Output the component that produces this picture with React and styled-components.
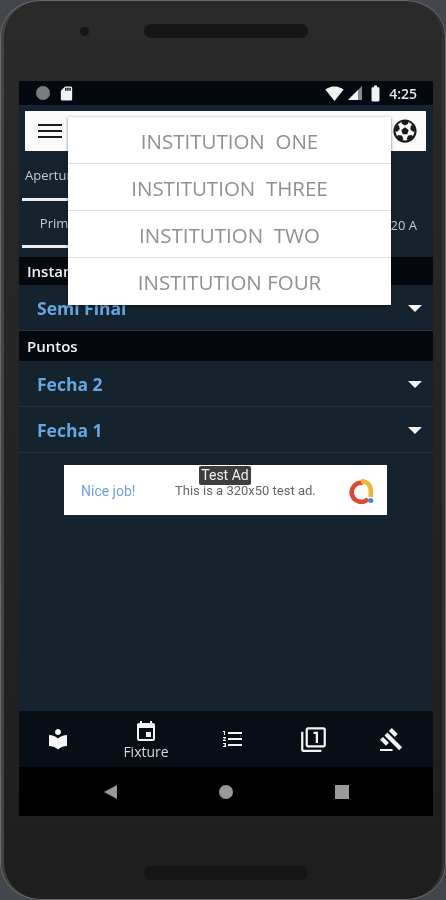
import React from "react";
import styled, { createGlobalStyle } from "styled-components";
import {
  MdLocalLibrary,
  MdEvent,
  MdFormatListNumbered,
  MdFilter1,
  MdGavel,
  MdSdCard,
  MdSignalWifi4Bar,
  MdBatteryStd,
} from "react-icons/md";
import { FaFutbol } from "react-icons/fa";

const institutions = ["INSTITUTION  ONE", "INSTITUTION  THREE", "INSTITUTION  TWO", "INSTITUTION FOUR"];

export default function App() {
  return (
    <>
      <GlobalStyle />
      <Phone>
        <TopBezel>
          <Camera />
          <Speaker />
        </TopBezel>
        <Screen>
          <StatusBar>
            <StatusGroup>
              <StatusDot />
              <MdSdCard size={17} color="#f2f2f2" />
            </StatusGroup>
            <StatusGroup>
              <MdSignalWifi4Bar size={19} color="#f2f2f2" />
              <SignalIcon viewBox="0 0 14 14">
                <path d="M14 0v14H0z" fill="#8b8b8b" />
                <path d="M10 4v10H0z" fill="#f2f2f2" />
              </SignalIcon>
              <MdBatteryStd size={19} color="#f2f2f2" />
              <Clock>4:25</Clock>
            </StatusGroup>
          </StatusBar>
          <Main>
            <TopSection>
              <AppBar>
                <MenuIcon>
                  <span />
                  <span />
                  <span />
                </MenuIcon>
                <FaFutbol size={24} color="#1a1a1a" />
              </AppBar>
              <Tabs $height={50}>
                <Tab $align="flex-start">Apertura</Tab>
              </Tabs>
              <Tabs $height={47}>
                <Tab $align="center">Primera</Tab>
                <TabEnd>Sub 20 A</TabEnd>
              </Tabs>
            </TopSection>
            <SectionTitle $height={28} $gap={9}>Instancia</SectionTitle>
            <Row>
              <RowTitle>Semi Final</RowTitle>
              <Caret />
            </Row>
            <SectionTitle $height={30}>Puntos</SectionTitle>
            <Row>
              <RowTitle>Fecha 2</RowTitle>
              <Caret />
            </Row>
            <Row>
              <RowTitle>Fecha 1</RowTitle>
              <Caret />
            </Row>
            <AdBanner>
              <AdBadge>Test Ad</AdBadge>
              <AdLead>Nice job!</AdLead>
              <AdText>This is a 320x50 test ad.</AdText>
              <AdLogo viewBox="0 0 26 26">
                <path d="M20 21a9.5 9.5 0 1 1-5-16" fill="none" stroke="#e0492f" strokeWidth="4.6" />
                <path d="M13 3.2c6 0 9.8 4 9.8 9.8V19" fill="none" stroke="#f4b52e" strokeWidth="4.6" />
                <circle cx="22.8" cy="22.4" r="2.5" fill="#3f84e5" />
              </AdLogo>
            </AdBanner>
            <Menu>
              {institutions.map((name) => (
                <MenuItem key={name}>{name}</MenuItem>
              ))}
            </Menu>
          </Main>
          <BottomNav>
            <NavItem>
              <MdLocalLibrary size={24} />
            </NavItem>
            <NavItem>
              <MdEvent size={24} />
              <NavLabel>Fixture</NavLabel>
            </NavItem>
            <NavItem>
              <MdFormatListNumbered size={24} />
            </NavItem>
            <NavItem>
              <MdFilter1 size={27} />
            </NavItem>
            <NavItem>
              <MdGavel size={25} />
            </NavItem>
          </BottomNav>
          <SystemNav>
            <BackKey />
            <HomeKey />
            <RecentKey />
          </SystemNav>
        </Screen>
        <BottomBezel>
          <Speaker />
        </BottomBezel>
      </Phone>
    </>
  );
}

const GlobalStyle = createGlobalStyle`
  html, body {
    margin: 0;
    padding: 0;
    background: #44464e;
  }
  body {
    font-family: "Open Sans", sans-serif;
  }
`;

const Phone = styled.div`
  width: 446px;
  height: 900px;
  box-sizing: border-box;
  padding: 0 13px 0 19px;
  border-radius: 40px / 36px;
  background: linear-gradient(#2a2a2a, #1e1e1e);
  box-shadow: inset 0 0 0 1px #6a6a6a, inset 4px 0 0 #444444, inset -4px 0 0 #333333;
  display: flex;
  flex-direction: column;
  overflow: hidden;
  filter: blur(0.4px);
`;

const TopBezel = styled.div`
  height: 81px;
  flex: none;
  position: relative;
  display: flex;
  justify-content: center;
  padding-top: 24px;
  box-sizing: border-box;
`;

const Camera = styled.div`
  position: absolute;
  left: 61px;
  top: 27px;
  width: 9px;
  height: 9px;
  border-radius: 50%;
  background: #161616;
`;

const Speaker = styled.div`
  width: 164px;
  height: 14px;
  border-radius: 7px;
  background: #151515;
`;

const Screen = styled.div`
  width: 414px;
  height: 735px;
  flex: none;
  display: flex;
  flex-direction: column;
  background: #15232f;
`;

const StatusBar = styled.div`
  height: 24px;
  flex: none;
  background: #05090f;
  display: flex;
  justify-content: space-between;
  align-items: center;
  padding: 0 16px 0 17px;
`;

const StatusGroup = styled.div`
  display: flex;
  align-items: center;
  gap: 4px;
`;

const StatusDot = styled.div`
  width: 14px;
  height: 14px;
  border-radius: 50%;
  background: #7b7b7b;
  margin-right: 4px;
`;

const SignalIcon = styled.svg`
  width: 14px;
  height: 14px;
`;

const Clock = styled.span`
  color: #e6e6e6;
  font-size: 14px;
  font-weight: 600;
`;

const Main = styled.div`
  flex: 1;
  position: relative;
  display: flex;
  flex-direction: column;
  box-shadow: inset 0 2px 0 #10283c;
`;

const TopSection = styled.div`
  padding-top: 6px;
`;

const AppBar = styled.div`
  height: 40px;
  margin: 0 7px 0 6px;
  background: #fbfbfb;
  display: flex;
  justify-content: space-between;
  align-items: center;
  padding: 0 9px 0 13px;
`;

const MenuIcon = styled.div`
  display: flex;
  flex-direction: column;
  gap: 4px;
  span {
    display: block;
    width: 24px;
    height: 2px;
    background: #1c1c1c;
  }
`;

const Tabs = styled.div`
  height: ${(p) => p.$height}px;
  display: flex;
  justify-content: space-between;
  align-items: center;
  padding: 0 3px;
`;

const Tab = styled.div`
  width: 90px;
  height: 100%;
  box-sizing: border-box;
  border-bottom: 3px solid #ededed;
  display: flex;
  align-items: center;
  justify-content: ${(p) => p.$align};
  padding: ${(p) => (p.$align === "center" ? "0 6px 0 0" : "0 0 0 3px")};
  color: #c4c8cc;
  font-size: 13px;
`;

const TabEnd = styled.div`
  color: #c4c8cc;
  font-size: 13px;
  padding-right: 13px;
`;

const SectionTitle = styled.div`
  height: ${(p) => p.$height}px;
  background: #05090f;
  color: #f2f2f2;
  font-size: 15px;
  font-weight: 600;
  display: flex;
  align-items: center;
  padding-left: 8px;
  margin-top: ${(p) => p.$gap || 0}px;
`;

const Row = styled.div`
  height: 46px;
  box-sizing: border-box;
  border-bottom: 1px solid #22313d;
  display: flex;
  justify-content: space-between;
  align-items: center;
  padding: 1px 11px 0 18px;
`;

const RowTitle = styled.span`
  color: #63a6e0;
  font-size: 17.5px;
  font-weight: 700;
`;

const Caret = styled.div`
  width: 0;
  height: 0;
  border-left: 7px solid transparent;
  border-right: 7px solid transparent;
  border-top: 7px solid #f5f5f5;
`;

const AdBanner = styled.div`
  width: 323px;
  height: 50px;
  margin: 12px 0 0 45px;
  background: #ffffff;
  position: relative;
  display: flex;
  align-items: center;
  padding-top: 1px;
  box-sizing: border-box;
  font-family: "Roboto", sans-serif;
  font-size: 13px;
`;

const AdBadge = styled.div`
  position: absolute;
  left: 135px;
  top: 1px;
  width: 52px;
  height: 19px;
  border-radius: 2px;
  background: #3e3e3e;
  color: #f0f0f0;
  font-size: 14px;
  text-align: center;
  line-height: 19px;
`;

const AdLead = styled.span`
  color: #6f9fe8;
  margin-left: 17px;
  width: 94px;
  font-size: 14px;
`;

const AdText = styled.span`
  color: #666;
  flex: 1;
`;

const AdLogo = styled.svg`
  width: 26px;
  height: 26px;
  margin-right: 13px;
`;

const Menu = styled.div`
  position: absolute;
  left: 49px;
  top: 12px;
  width: 323px;
  background: #ffffff;
  box-shadow: 0 1px 3px rgba(0, 0, 0, 0.5);
`;

const MenuItem = styled.div`
  height: 47px;
  box-sizing: border-box;
  border-bottom: 1px solid #dedede;
  padding-top: 1px;
  display: flex;
  justify-content: center;
  align-items: center;
  color: #909090;
  font-size: 20.5px;
  white-space: pre;
  &:last-child {
    border-bottom: 0;
  }
`;

const BottomNav = styled.div`
  height: 56px;
  flex: none;
  background: #080e15;
  display: grid;
  grid-template-columns: 78px 98px 76px 84px 72px;
`;

const NavItem = styled.div`
  color: #f4f4f4;
  display: flex;
  flex-direction: column;
  align-items: center;
  justify-content: center;
  svg {
    display: block;
  }
`;

const NavLabel = styled.span`
  color: #d8d8d8;
  font-size: 14px;
  line-height: 15px;
`;

const SystemNav = styled.div`
  height: 49px;
  flex: none;
  background: #000;
  display: flex;
  justify-content: center;
  align-items: center;
  gap: 102px;
`;

const BackKey = styled.div`
  width: 0;
  height: 0;
  border-top: 7px solid transparent;
  border-bottom: 7px solid transparent;
  border-right: 13px solid #9a9a9a;
`;

const HomeKey = styled.div`
  width: 14px;
  height: 14px;
  border-radius: 50%;
  background: #9a9a9a;
`;

const RecentKey = styled.div`
  width: 14px;
  height: 14px;
  background: #9a9a9a;
`;

const BottomBezel = styled.div`
  flex: 1;
  display: flex;
  justify-content: center;
  padding-top: 50px;
  box-sizing: border-box;
`;
